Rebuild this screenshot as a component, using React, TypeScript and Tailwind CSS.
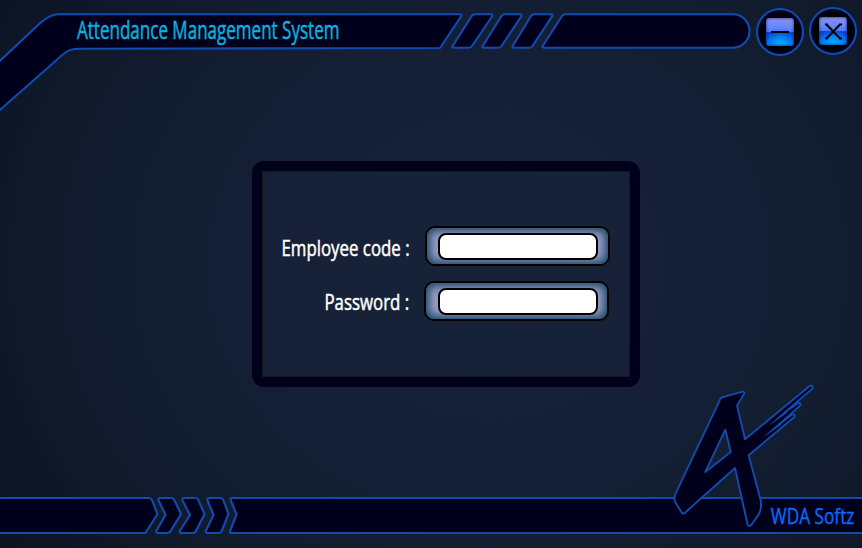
import React from "react";

const NAVY = "#00001c";
const LINE = "#124bb0";

function Frame() {
  return (
    <svg className="absolute inset-0 h-full w-full" viewBox="0 0 862 548" fill={NAVY} stroke={LINE} strokeWidth="2.1" strokeLinejoin="round" aria-hidden="true">
      <path d="M-3 63.500 L37 26 Q49 14.300 58 14.300 L460 14.300 Q462.500 14.300 461 16.500 L440 48 L80 48.800 Q70 48.500 64 53.500 L-3 112.500 Z" />
      <path d="M474 14.300 H491 Q493.500 14.300 492 16.500 L472 46 Q470.800 47.700 469 47.700 H453.500 Q451.500 47.500 453 45.500 L472 15.500 Z" />
      <path d="M503.500 14.300 H520 Q522.500 14.300 521.200 16.500 L501.500 46 Q500.300 47.700 498.500 47.700 H484 Q481.500 47.500 483 45.500 L501.500 16 Z" />
      <path d="M533 14.300 H550.500 Q553.500 14.300 552 16.500 L532.500 46 Q531.300 47.700 529.500 47.700 H514 Q511.500 47.500 513 45.500 L531 16 Z" />
      <path d="M564 14.300 H733 A16.500 16.700 0 0 1 733 47.700 H544 Q541.500 47.500 543 45.500 L562 16 Z" />
      <path d="M-3 498 H149 Q151 498 152 500 L157.500 514 L145.500 533 H-3 Z" />
      <path d="M160 498 H171.500 Q173.500 498 174.300 500 L181 514 L170 532 L168 533 H157.500 Q155.500 532.500 156.500 530.500 L165.500 515 L158.500 500.500 Q158 498 160 498 Z" />
      <path d="M184 498 H195.500 Q197.500 498 198.300 500 L204.500 514 L195.500 532 L193.500 533 H181 Q179 532.500 180 530.500 L190 515 L182.500 500.500 Q182 498 184 498 Z" />
      <path d="M209.500 498 H220.500 Q222.500 498 223.300 500 L228.500 514 L221.500 531.500 L219.500 533 H207 Q205 532.500 206 530.500 L213.500 515 L207.500 500.500 Q207 498 209.500 498 Z" />
      <path d="M865 498 H232 Q230 498 230.800 500.500 L236.500 514.500 L230 531 Q229.500 533 231.500 533 H865 Z" />
      <g transform="translate(660 375.300) scale(.33333)" strokeWidth="5.700">
        <path fillRule="evenodd" d="M183 67 L248 49 Q256 50 252 56 L231 91 L255 192 L449 32 Q462 29 457 40 L376 110 L414 83 Q425 83 420 91 L358 147 L397 117 Q408 117 403 125 L266 240 L302 375 Q306 400 296 418 L273 450 Q267 455 263 449 L225 278 L74 413 Q69 417 65 412 L44 377 Q41 365 48 352 Z M196 163 L212 230 L136 290 Z" />
        <path stroke="none" fill={LINE} d="M378 105 L323 154 L382 112 Z M360 141 L307 187 L364 149 Z" />
      </g>
    </svg>
  );
}

function WindowButton({ label, children }: { label: string; children: React.ReactNode }) {
  return (
    <button aria-label={label} className="flex size-12 items-center justify-center rounded-full border-2 border-[#124bb0] bg-[radial-gradient(circle,#000_62%,#000024_66%)]">
      <span className="flex size-7 items-center justify-center rounded-[3px] bg-[radial-gradient(ellipse_16px_12px_at_50%_90%,#00acff_0%,#00a0ff99_50%,transparent_100%),linear-gradient(#8f8fea_0%,#7089fa_25%,#4a7cff_49%,#0a3fd8_52%,#0757e0_75%,#0878f0_100%)] shadow-[inset_0_0_3px_#06207c]">
        <svg viewBox="0 0 28 28" className="size-7" stroke="#000" fill="none" aria-hidden="true">{children}</svg>
      </span>
    </button>
  );
}

function Field({ id, type, className = "" }: { id: string; type: string; className?: string }) {
  return (
    <div className={`flex h-10 w-[185px] items-center rounded-[10px] border-2 border-black bg-[#989bc6] shadow-[inset_0_0_9px_3px_#174660] ${className}`}>
      <input id={id} type={type} className="h-[27px] w-40 rounded-lg border-2 border-black bg-white px-2 text-sm text-black outline-none" />
    </div>
  );
}

export default function App() {
  return (
    <div className="relative flex h-[548px] w-[862px] flex-col overflow-hidden bg-[radial-gradient(ellipse_580px_520px_at_490px_265px,#17223a_0%,#152038_38%,#121d2f_60%,#0f192a_80%,#0c1424_100%)] font-['Open_Sans',sans-serif]">
      <Frame />
      <header className="relative flex h-[161px] shrink-0 items-start pt-[7px] pl-[77px]">
        <h1 className="mt-[5px] w-[679px] text-[25px] leading-[34px] whitespace-nowrap text-[#08b3dc] [-webkit-text-stroke:0.5px]">
          <span className="inline-block origin-left scale-x-[0.681]">Attendance Management System</span>
        </h1>
        <div className="flex gap-[5px]">
          <div className="pt-px">
            <WindowButton label="Minimize"><path d="M5 14H23" strokeWidth="2" /></WindowButton>
          </div>
          <WindowButton label="Close"><path d="M7.500 7.500L21 21.500M21 7.500L7.500 21.500M6 7.500H9M20 7.500H23M6 21.500H9M20 21.500H23" strokeWidth="2" /></WindowButton>
        </div>
      </header>
      <main className="relative ml-[252px] h-[226px] w-[388px] shrink-0 rounded-xl border-10 border-[#00001c]">
        <form className="flex h-full flex-col gap-[15px] border border-[#101820] bg-[#182338]/60 pt-[54px] pl-[17px] text-[21.500px] leading-10 text-white">
          <div className="flex h-10">
            <label htmlFor="code" className="flex w-[130px] justify-end whitespace-nowrap [-webkit-text-stroke:0.5px]"><span className="inline-block origin-right translate-y-0.5 scale-x-[0.783]">Employee code :</span></label>
            <Field id="code" type="text" className="ml-[15px] pl-[11px]" />
          </div>
          <div className="flex h-10">
            <label htmlFor="password" className="flex w-[129px] justify-end whitespace-nowrap [-webkit-text-stroke:0.5px]"><span className="inline-block origin-right translate-y-px scale-x-[0.783]">Password :</span></label>
            <Field id="password" type="password" className="ml-[15px] pl-3" />
          </div>
        </form>
      </main>
      <footer className="relative flex flex-1 items-end justify-end pr-2 pb-[17px] text-[21.500px] leading-[30px] text-[#0a68fa] [-webkit-text-stroke:0.4px]">
        <span className="inline-block origin-right scale-x-[0.8]">WDA Softz</span>
      </footer>
    </div>
  );
}
